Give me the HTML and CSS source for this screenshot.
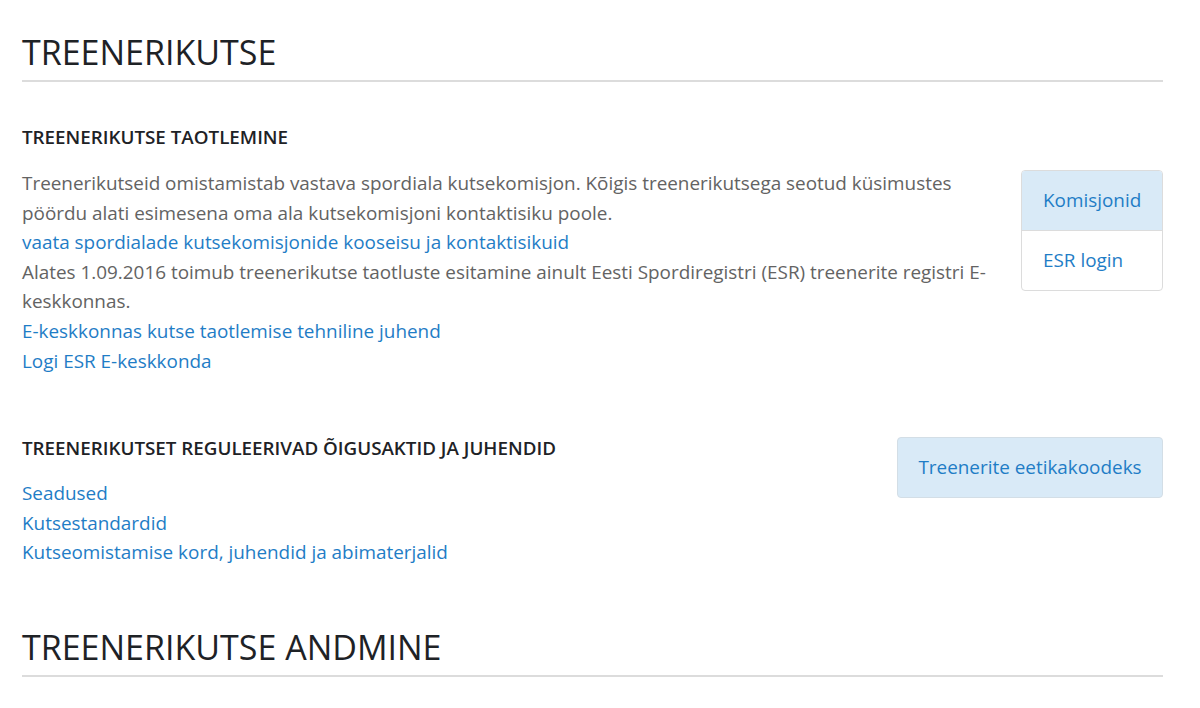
FILE: index.html
```html
<!DOCTYPE html>
<html>
<head>
    <meta charset="utf-8">
    <title>Treenerikutse</title>
    <link rel="stylesheet" href="styles.css">
</head>
<body>
    <div class="page">
        <h1 class="page-title">TREENERIKUTSE</h1>

        <div class="block block-first">
            <div class="block-main">
                <h3 class="block-title">TREENERIKUTSE TAOTLEMINE</h3>
                <div class="block-text">
                    Treenerikutseid omistamistab vastava spordiala kutsekomisjon. Kõigis treenerikutsega seotud küsimustes pöördu alati esimesena oma ala kutsekomisjoni kontaktisiku poole.<br>
                    <a href="#">vaata spordialade kutsekomisjonide kooseisu ja kontaktisikuid</a><br>
                    Alates 1.09.2016 toimub treenerikutse taotluste esitamine ainult Eesti Spordiregistri (ESR) treenerite registri E-keskkonnas.<br>
                    <a href="#">E-keskkonnas kutse taotlemise tehniline juhend</a><br>
                    <a href="#">Logi ESR E-keskkonda</a>
                </div>
            </div>
            <div class="side-menu">
                <a href="#" class="side-item active">Komisjonid</a>
                <a href="#" class="side-item">ESR login</a>
            </div>
        </div>

        <div class="block block-second">
            <div class="block-main">
                <h3 class="block-title">TREENERIKUTSET REGULEERIVAD ÕIGUSAKTID JA JUHENDID</h3>
                <div class="block-text">
                    <a href="#">Seadused</a><br>
                    <a href="#">Kutsestandardid</a><br>
                    <a href="#">Kutseomistamise kord, juhendid ja abimaterjalid</a>
                </div>
            </div>
            <a href="#" class="side-button">Treenerite eetikakoodeks</a>
        </div>

        <h1 class="page-title page-title-second">TREENERIKUTSE ANDMINE</h1>
    </div>
</body>
</html>
```

FILE: styles.css
```css
body{
    margin:0;
    background:#fff;
    font-family:"Open Sans", "Noto Sans", sans-serif;
    font-size:18.9px;
    color:#636363;
}
a{
    color:#1f7dc6;
    text-decoration:none;
}
.page{
    width:1141px;
    margin-left:22px;
    padding-top:30px;
}
.page-title{
    margin:0;
    font-size:34px;
    font-weight:400;
    line-height:44px;
    color:#1e2226;
    padding-bottom:6px;
    border-bottom:2px solid #dcdcdc;
}
.page-title-second{
    margin-top:57px;
}
.block{
    display:flex;
    justify-content:space-between;
    align-items:flex-start;
}
.block-first{
    margin-top:44px;
}
.block-second{
    margin-top:61px;
}
.block-main{
    flex:1;
}
.block-title{
    margin:0;
    font-size:18.8px;
    font-weight:600;
    line-height:22px;
    color:#1e2226;
}
.block-text{
    line-height:29.6px;
}
.block-first .block-main{
    max-width:970px;
}
.block-first .block-text{
    margin-top:21px;
}
.block-second .block-text{
    margin-top:20px;
}
.side-menu{
    width:140px;
    margin-top:44px;
    border:1px solid #dcdcdc;
    border-radius:4px;
    overflow:hidden;
}
.side-item{
    display:block;
    height:59px;
    line-height:59px;
    padding-left:21px;
}
.side-item + .side-item{
    border-top:1px solid #dcdcdc;
}
.side-item.active{
    background:#d9eaf7;
}
.side-button{
    display:block;
    width:264px;
    height:59px;
    line-height:59px;
    text-align:center;
    background:#d9eaf7;
    border:1px solid #d3dee6;
    border-radius:4px;
}
```
